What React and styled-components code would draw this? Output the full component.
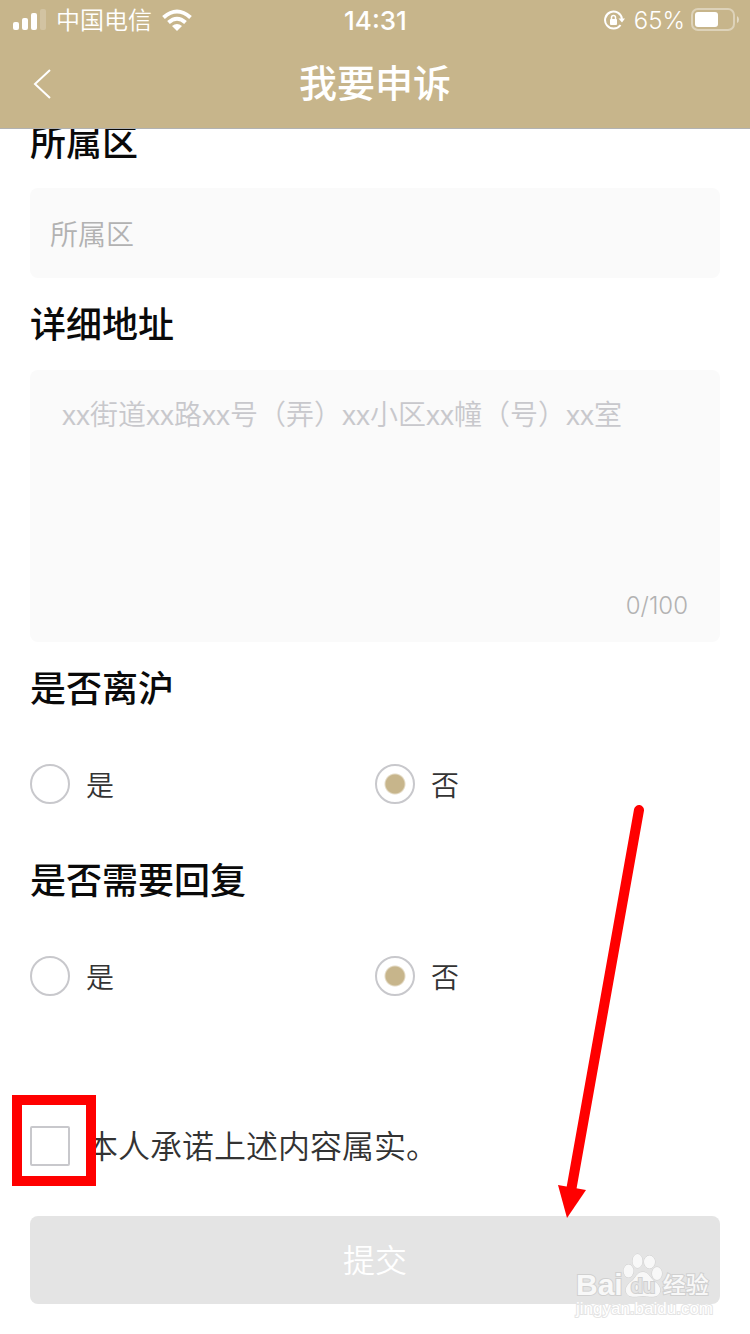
import React, { Component } from 'react';
import styled, { createGlobalStyle } from 'styled-components';

const gold = '#c7b58b';
const grey = '#c8c8cc';

const GlobalStyle = createGlobalStyle`
  *, *::after {
    box-sizing: border-box;
  }
  body {
    margin: 0;
    background: #fff;
    color: #333;
    font-family: "Noto Sans CJK SC", sans-serif;
    font-weight: 350;
  }
  input, textarea, button {
    margin: 0;
    font-family: inherit;
    font-weight: inherit;
  }
`;

const Page = styled.div`
  position: relative;
  width: 100%;
  overflow: hidden;
`;

const Header = styled.header`
  position: sticky;
  top: 0;
  z-index: 2;
  background: ${gold};
  color: #fff;
  border-bottom: 1px solid #b2b2b2;
`;

const StatusBar = styled.div`
  display: grid;
  grid-template-columns: 1fr auto 1fr;
  align-items: center;
  height: 40px;
  padding: 0 11px 0 12px;
`;

const StatusGroup = styled.div`
  display: flex;
  align-items: center;
  justify-content: ${props => props.$end ? 'flex-end' : 'flex-start'};
  gap: ${props => props.$end ? '6px' : '10px'};
`;

const StatusText = styled.span`
  padding-top: 2px;
  font-family: Inter, "Noto Sans CJK SC", sans-serif;
  font-size: ${props => props.$time ? '26px' : '24px'};
  font-weight: ${props => props.$time ? 500 : 350};
  line-height: 36px;
`;

const NavBar = styled.div`
  display: grid;
  grid-template-columns: 84px 1fr 84px;
  height: 88px;
`;

const BackButton = styled.button`
  display: flex;
  align-items: center;
  justify-content: center;
  height: 88px;
  padding: 0;
  border: 0;
  background: none;
  color: #fff;
`;

const Title = styled.h1`
  margin: 0;
  font-size: 38px;
  font-weight: 500;
  line-height: 82px;
  text-align: center;
`;

// the form is scrolled, its first label slides under the header
const Form = styled.form`
  margin-top: -33px;
  padding: 0 30px 30px;
`;

const Heading = styled.label`
  display: block;
  padding: 0 0 4px;
  color: #0a0a0a;
  font-size: 36px;
  font-weight: 500;
  line-height: 88px;
`;

const Group = styled.fieldset`
  min-width: 0;
  margin: 0;
  padding: 0;
  border: 0;
`;

const Input = styled.input`
  display: block;
  width: 100%;
  height: 90px;
  padding: 0 20px;
  border: 0;
  border-radius: 8px;
  background: #fafafa;
  font-size: 28px;
  &::placeholder {
    color: #b2b2b2;
    opacity: 1;
  }
`;

const AddressBox = styled.div`
  padding: 24px 32px 16px;
  border-radius: 8px;
  background: #fafafa;
`;

const TextArea = styled.textarea`
  display: block;
  width: 100%;
  height: 192px;
  padding: 0;
  border: 0;
  outline: 0;
  resize: none;
  background: transparent;
  font-family: "Liberation Sans", "Noto Sans CJK SC", sans-serif;
  font-size: 28px;
  line-height: 44px;
  &::placeholder {
    color: ${grey};
    opacity: 1;
  }
`;

const Counter = styled.div`
  color: #b2b2b2;
  font-family: Inter, sans-serif;
  font-size: 24px;
  line-height: 40px;
  text-align: right;
`;

const Options = styled.div`
  display: grid;
  grid-template-columns: 1fr 1fr;
  height: 100px;
`;

const Option = styled.label`
  display: flex;
  align-items: center;
  gap: 16px;
  font-size: 28px;
`;

const Radio = styled.input`
  appearance: none;
  width: 40px;
  height: 40px;
  border: 2px solid ${grey};
  border-radius: 50%;
  background: #fff;
  &:checked {
    background: radial-gradient(circle, ${gold} 9px, #fff 11px);
  }
`;

const Promise = styled.div`
  display: flex;
  gap: 16px;
  margin: 100px 0 50px;
  font-size: 32px;
  line-height: 36px;
`;

const CheckHolder = styled.span`
  position: relative;
  width: 40px;
  height: 40px;
  &::after {
    content: '';
    position: absolute;
    top: -31px;
    left: -18px;
    width: 84px;
    height: 91px;
    border: 10px solid #f00;
    pointer-events: none;
  }
`;

const Checkbox = styled.input`
  appearance: none;
  display: block;
  width: 40px;
  height: 40px;
  border: 2px solid ${grey};
  border-radius: 2px;
  background: #fff;
`;

const Submit = styled.button`
  display: block;
  width: 100%;
  height: 88px;
  padding: 0 0 4px;
  border: 0;
  border-radius: 8px;
  background: #e4e4e4;
  color: #fff;
  font-size: 32px;
`;

const Arrow = styled.svg`
  position: absolute;
  right: 100px;
  bottom: 109px;
  pointer-events: none;
`;

const Watermark = styled.div`
  position: absolute;
  right: 38px;
  bottom: 15px;
  width: 136px;
  color: #f8f8f8;
  pointer-events: none;
`;

const Brand = styled.div`
  display: flex;
  align-items: flex-end;
  height: 46px;
  font-family: "Liberation Sans", "Noto Sans CJK SC", sans-serif;
  line-height: 28px;
  -webkit-text-stroke: 2px #d0d0d0;
  paint-order: stroke fill;
`;

const BrandName = styled.span`
  font-size: 30px;
  font-weight: 700;
`;

const BrandSuffix = styled.span`
  font-size: 23px;
  font-weight: 500;
`;

const Site = styled.div`
  font-family: "Liberation Sans", sans-serif;
  font-size: 17px;
  line-height: 20px;
  color: #fff;
  -webkit-text-stroke: 2px #e4e4e4;
  paint-order: stroke fill;
`;

const SignalIcon = () => (
  <svg width="34" height="22" viewBox="0 0 34 22" fill="#fff">
    <rect x="1" y="13" width="6" height="8" rx="2" />
    <rect x="10" y="9" width="6" height="12" rx="2" />
    <rect x="19" y="4" width="6" height="17" rx="2" />
    <rect x="28" y="0" width="6" height="21" rx="2" opacity=".2" />
  </svg>
);

const WifiIcon = () => (
  <svg width="30" height="22" viewBox="0 0 30 22" fill="none" stroke="#fff" strokeWidth="4">
    <path d="M1.500 8.500Q15-3.500 28.500 8.500" />
    <path d="M6.500 13.500Q15 6 23.500 13.500" />
    <path d="M10 17Q15 13 20 17L15 22Z" fill="#fff" stroke="none" />
  </svg>
);

const LockIcon = () => (
  <svg width="24" height="20" viewBox="0 0 24 20" fill="none" stroke="#fff" strokeWidth="2">
    <path d="M16.500 15A8.500 8.500 0 1 1 18 9" />
    <path d="M14.500 8.500H21L18 12.500Z" fill="#fff" stroke="none" />
    <rect x="6" y="9" width="7" height="6" rx="1" fill="#fff" stroke="none" />
    <path d="M7.500 10V7.500a2 2 0 0 1 4 0V10" strokeWidth="1.500" />
  </svg>
);

const BatteryIcon = () => (
  <svg width="48" height="24" viewBox="0 0 48 24">
    <rect x="1" y="1" width="42" height="21" rx="6" fill="none" stroke="#fff" strokeWidth="2" opacity=".4" />
    <rect x="4" y="4" width="23" height="15" rx="3" fill="#fff" />
    <path d="M46 8Q48 9 48 11.500T46 15Z" fill="#fff" opacity=".5" />
  </svg>
);

const BackIcon = () => (
  <svg width="18" height="30" viewBox="0 0 18 30" fill="none" stroke="#fff" strokeWidth="2">
    <path d="M17 1L2 15L17 29" />
  </svg>
);

const PawText = styled.text`
  font-family: "Liberation Sans", sans-serif;
  font-size: 20px;
  font-weight: 700;
  fill: #e4e4e4;
  stroke: #d0d0d0;
  stroke-width: 2px;
`;

const PawIcon = () => (
  <svg width="40" height="46" viewBox="0 0 40 46" fill="#f8f8f8" stroke="#d0d0d0" strokeWidth="1">
    <ellipse cx="5.500" cy="18" rx="5" ry="6.500" />
    <ellipse cx="14.500" cy="8" rx="5" ry="7" />
    <ellipse cx="26.500" cy="9" rx="5.500" ry="6.500" />
    <ellipse cx="34" cy="20.500" rx="5" ry="6.500" />
    <path d="M20 19C25 19 27 24 31 28C35 31 38 34 37 39C35 45 29 44 20 43C11 44 5 45 3 39C2 34 5 31 10 27C14 22 15 19 20 19Z" />
    <PawText x="20" y="40" textAnchor="middle">du</PawText>
  </svg>
);

const YesNo = ({ name, title }) => (
  <Group>
    <Heading as="legend">{title}</Heading>
    <Options>
      <Option>
        <Radio type="radio" name={name} value="yes" />
        <span>是</span>
      </Option>
      <Option>
        <Radio type="radio" name={name} value="no" defaultChecked />
        <span>否</span>
      </Option>
    </Options>
  </Group>
);

export default class App extends Component {

  render() {
    return (
      <Page>
        <GlobalStyle />
        <Header>
          <StatusBar>
            <StatusGroup>
              <SignalIcon />
              <StatusText>中国电信</StatusText>
              <WifiIcon />
            </StatusGroup>
            <StatusText $time>14:31</StatusText>
            <StatusGroup $end>
              <LockIcon />
              <StatusText>65%</StatusText>
              <BatteryIcon />
            </StatusGroup>
          </StatusBar>
          <NavBar>
            <BackButton type="button" aria-label="返回"><BackIcon /></BackButton>
            <Title>我要申诉</Title>
          </NavBar>
        </Header>

        <Form>
          <Heading htmlFor="district">所属区</Heading>
          <Input id="district" type="text" placeholder="所属区" />

          <Heading htmlFor="address">详细地址</Heading>
          <AddressBox>
            <TextArea id="address" maxLength={100} placeholder="xx街道xx路xx号（弄）xx小区xx幢（号）xx室" />
            <Counter>0/100</Counter>
          </AddressBox>

          <YesNo name="left" title="是否离沪" />
          <YesNo name="reply" title="是否需要回复" />

          <Promise>
            <CheckHolder>
              <Checkbox id="promise" type="checkbox" />
            </CheckHolder>
            <label htmlFor="promise">本人承诺上述内容属实。</label>
          </Promise>

          <Submit type="button">提交</Submit>
        </Form>

        <Arrow width="100" height="430" viewBox="0 0 100 430">
          <path d="M89 15L21 396" stroke="#f00" strokeWidth="10" strokeLinecap="round" />
          <path d="M8 390L36 395L17 423Z" fill="#f00" />
        </Arrow>

        <Watermark>
          <Brand>
            <BrandName>Bai</BrandName>
            <PawIcon />
            <BrandSuffix>经验</BrandSuffix>
          </Brand>
          <Site>jingyan.baidu.com</Site>
        </Watermark>
      </Page>
    );
  }
}
